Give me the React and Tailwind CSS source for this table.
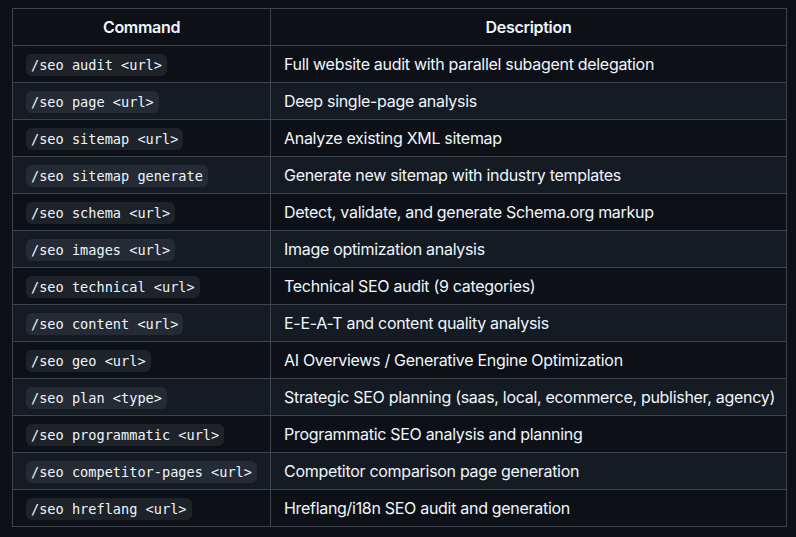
const COMMANDS = [
  { cmd: '/seo audit <url>', desc: 'Full website audit with parallel subagent delegation' },
  { cmd: '/seo page <url>', desc: 'Deep single-page analysis' },
  { cmd: '/seo sitemap <url>', desc: 'Analyze existing XML sitemap' },
  { cmd: '/seo sitemap generate', desc: 'Generate new sitemap with industry templates' },
  { cmd: '/seo schema <url>', desc: 'Detect, validate, and generate Schema.org markup' },
  { cmd: '/seo images <url>', desc: 'Image optimization analysis' },
  { cmd: '/seo technical <url>', desc: 'Technical SEO audit (9 categories)' },
  { cmd: '/seo content <url>', desc: 'E-E-A-T and content quality analysis' },
  { cmd: '/seo geo <url>', desc: 'AI Overviews / Generative Engine Optimization' },
  { cmd: '/seo plan <type>', desc: 'Strategic SEO planning (saas, local, ecommerce, publisher, agency)' },
  { cmd: '/seo programmatic <url>', desc: 'Programmatic SEO analysis and planning' },
  { cmd: '/seo competitor-pages <url>', desc: 'Competitor comparison page generation' },
  { cmd: '/seo hreflang <url>', desc: 'Hreflang/i18n SEO audit and generation' },
]

function App() {
  return (
    <div className="min-h-[537px] bg-[#0d1117] pt-[8px] pl-[12px] text-[#f0f6fc] font-['Inter','Liberation_Sans',sans-serif] text-[16px] leading-[24px] tracking-[-0.3px]">
      <table className="table-fixed border-collapse w-[775px]">
        <colgroup>
          <col className="w-[258px]" />
          <col />
        </colgroup>
        <thead>
          <tr className="bg-[#0d1117]">
            <th className="h-[37px] border border-[#3d444d] px-[13px] py-[6px] font-semibold text-center">Command</th>
            <th className="h-[37px] border border-[#3d444d] px-[13px] py-[6px] font-semibold text-center">Description</th>
          </tr>
        </thead>
        <tbody>
          {COMMANDS.map((row, i) => (
            <tr key={row.cmd} className={i % 2 === 1 ? 'bg-[#151b23]' : 'bg-[#0d1117]'}>
              <td className="h-[37px] border border-[#3d444d] px-[13px] py-[6px]">
                <code className="rounded-[6px] bg-[#656c7633] px-[5px] py-[3px] font-['DejaVu_Sans_Mono','Liberation_Mono',monospace] text-[13.6px] leading-[16px] tracking-normal whitespace-nowrap">
                  {row.cmd}
                </code>
              </td>
              <td className="h-[37px] border border-[#3d444d] px-[13px] py-[6px] whitespace-nowrap">{row.desc}</td>
            </tr>
          ))}
        </tbody>
      </table>
    </div>
  )
}

export default App
